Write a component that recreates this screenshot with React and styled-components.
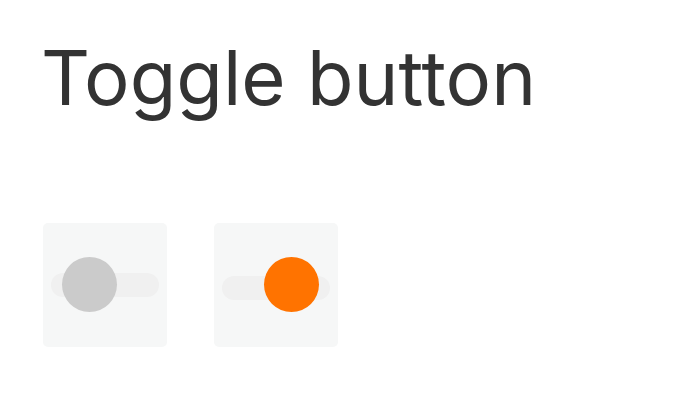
import React, { useState } from 'react';
import styled, { createGlobalStyle } from 'styled-components';

const GlobalStyle = createGlobalStyle`
  body {
    margin: 0;
    background: #fff;
    font-family: Inter, "Noto Sans", sans-serif;
  }
`;

const Page = styled.div`
  padding: 27px 43px;
`;

const Title = styled.h1`
  margin: 0 0 0 -2px;
  font-size: 76px;
  font-weight: 400;
  line-height: 100px;
  color: #333333;
`;

const Row = styled.div`
  display: flex;
  gap: 47px;
  margin-top: 96px;
`;

const Box = styled.div`
  width: 124px;
  height: 124px;
  border-radius: 5px;
  background: #f6f7f7;
  display: flex;
  align-items: center;
  justify-content: center;
`;

const Track = styled.button`
  position: relative;
  width: 108px;
  height: 24px;
  border: none;
  padding: 0;
  border-radius: 12px;
  background: #f0f0f0;
  cursor: pointer;
  margin-top: ${p => (p.$on ? '5px' : '-1px')};
`;

const Knob = styled.span`
  position: absolute;
  top: 50%;
  left: ${p => (p.$on ? '42px' : '11px')};
  width: 55px;
  height: 55px;
  margin-top: ${p => (p.$on ? '-30.5px' : '-27.5px')};
  border-radius: 50%;
  background: ${p => (p.$on ? '#ff7300' : '#cbcbcb')};
  transition: left 0.2s;
`;

const Toggle = ({ initial }) => {
  const [on, setOn] = useState(initial);
  return (
    <Box>
      <Track $on={on} onClick={() => setOn(!on)} aria-pressed={on}>
        <Knob $on={on} />
      </Track>
    </Box>
  );
};

const App = () => (
  <Page>
    <GlobalStyle />
    <Title>Toggle button</Title>
    <Row>
      <Toggle initial={false} />
      <Toggle initial={true} />
    </Row>
  </Page>
);

export default App;
